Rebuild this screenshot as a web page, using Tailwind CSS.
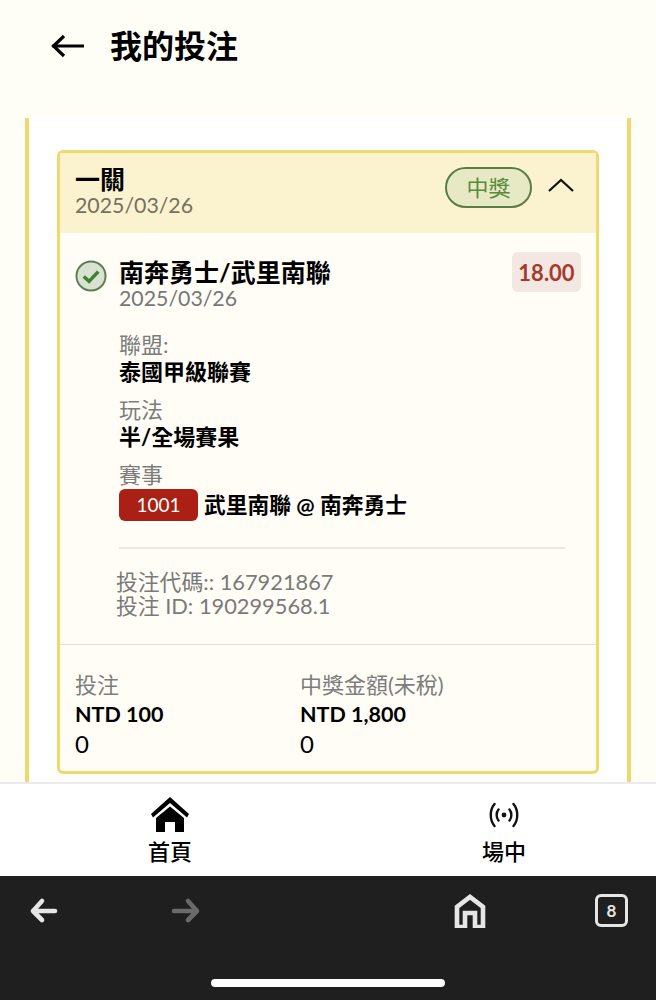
<!DOCTYPE html>
<html lang="zh-Hant">
<head>
  <meta charset="UTF-8">
  <meta name="viewport" content="width=device-width, initial-scale=1.0">
  <title>我的投注</title>
  <script src="https://cdn.jsdelivr.net/npm/@tailwindcss/browser@4"></script>
</head>
<body class="bg-[#fffef6] font-['Lato','Noto_Sans_CJK_TC',sans-serif] text-black">
  <div class="w-[656px] h-[1000px] flex flex-col overflow-hidden">

    <!-- Header -->
    <header class="h-[118px] shrink-0 flex items-start pl-[51px] pt-[27px] gap-[25px]">
      <svg class="w-[34px] h-[38px]" viewBox="0 0 34 38" fill="none" stroke="#000" stroke-width="3.2"><path d="M1 19H33M13 9L2.5 19L13 29"/></svg>
      <h1 class="text-[32px] leading-[38px] font-bold">我的投注</h1>
    </header>

    <!-- Content -->
    <main class="h-[664px] shrink-0 mx-[25px] bg-white border-x-4 border-[#f0d96c] pt-[32px] px-[28px]">
      <section class="h-[624px] border-[3px] border-[#f0d96c] rounded-[6px] bg-[#fffdf6] flex flex-col">
        <div class="h-[80px] shrink-0 bg-[#fbf3d0] flex justify-between pl-[15px] pr-[22px]">
          <div class="pt-[12px]">
            <div class="text-[25px] leading-[28px] font-bold">一關</div>
            <div class="text-[21.3px] leading-[24px] text-[#75705f]">2025/03/26</div>
          </div>
          <div class="flex items-start pt-[14px] gap-[16px]">
            <span class="w-[87px] h-[41px] rounded-full border-2 border-[#5a7d46] bg-[#e6e9c4] text-[#5a8a3c] text-[22px] flex items-center justify-center">中獎</span>
            <svg class="w-[26px] h-[16px] mt-[10px]" viewBox="0 0 26 16" fill="none" stroke="#111" stroke-width="2.3"><path d="M1 14L13 3L25 14"/></svg>
          </div>
        </div>

        <div class="flex-1 pl-[15px] pr-[15px] pt-[19px]">
          <div class="flex justify-between">
            <div class="flex gap-[12px]">
              <svg class="w-[32px] h-[32px] mt-[8px] shrink-0" viewBox="0 0 33 33" fill="none"><circle cx="16.5" cy="16.5" r="15" fill="#d9e2d1" stroke="#5a7d54" stroke-width="2"/><path d="M9 17L14.5 22L24 12" stroke="#3f7f35" stroke-width="3.6"/></svg>
              <div class="mt-[5px]">
                <div class="text-[25px] leading-[30px] font-bold">南奔勇士/武里南聯</div>
                <div class="text-[21.3px] leading-[22px] text-[#77777a]">2025/03/26</div>
              </div>
            </div>
            <span class="w-[69px] h-[40px] rounded-[6px] bg-[#f3e7e1] text-[#a53a30] text-[22px] font-bold flex items-center justify-center">18.00</span>
          </div>

          <div class="ml-[44px] mt-[22px]">
            <div class="text-[22px] leading-[27px] text-[#7d7d7d]">聯盟:</div>
            <div class="text-[22px] leading-[27px] font-bold">泰國甲級聯賽</div>
            <div class="text-[22px] leading-[27px] text-[#7d7d7d] mt-[11px]">玩法</div>
            <div class="text-[22px] leading-[27px] font-bold">半/全場賽果</div>
            <div class="text-[22px] leading-[27px] text-[#7d7d7d] mt-[11px]">賽事</div>
            <div class="flex items-center gap-[6px] mt-[1px]">
              <span class="w-[79px] h-[32px] rounded-[6px] bg-[#ab2014] text-white text-[19px] flex items-center justify-center">1001</span>
              <span class="text-[21.75px] leading-[32px] font-bold">武里南聯 @ 南奔勇士</span>
            </div>
          </div>

          <div class="ml-[44px] mr-[16px] mt-[26px] border-t-2 border-[#e8e8e4]"></div>

          <div class="ml-[41px] mt-[21px] text-[21.8px] leading-[23.5px] text-[#7a7a7a]">
            <div>投注代碼:: 167921867</div>
            <div>投注 ID: 190299568.1</div>
          </div>
        </div>

        <div class="h-[127px] shrink-0 border-t border-[#dfdfdc] pl-[15px] pt-[26px] flex">
          <div class="w-[225px]">
            <div class="text-[22px] leading-[28px] text-[#7d7d7d]">投注</div>
            <div class="text-[21.5px] leading-[31px] font-bold">NTD 100</div>
            <div class="text-[24px] leading-[28px]">0</div>
          </div>
          <div>
            <div class="text-[22px] leading-[28px] text-[#7d7d7d]">中獎金額(未稅)</div>
            <div class="text-[21.5px] leading-[31px] font-bold">NTD 1,800</div>
            <div class="text-[24px] leading-[28px]">0</div>
          </div>
        </div>
      </section>
    </main>

    <!-- Bottom nav -->
    <nav class="h-[94px] shrink-0 bg-white border-t-2 border-[#ecebec] relative flex">
      <div class="w-[340px] flex flex-col items-center pt-[13px]">
        <svg class="w-[40px] h-[36px]" viewBox="0 0 40 36" fill="#000"><path d="M20 0L39 17L37 20.5L20 6L3 20.5L1 17Z"/><path d="M6 21L20 9.5L34 21V35H25V25H15V35H6Z"/></svg>
        <span class="text-[22px] leading-[30px] mt-[4px] font-medium">首頁</span>
      </div>
      <div class="flex-1 flex flex-col items-center pt-[15px] pl-[12px]">
        <svg class="w-[32px] h-[32px]" viewBox="0 0 32 32" fill="none" stroke="#111" stroke-width="2.4" stroke-linecap="round"><circle cx="16" cy="16" r="2.4" fill="#111" stroke="none"/><path d="M10.5 10.5C8 13.5 8 18.5 10.5 21.5M21.5 10.5C24 13.5 24 18.5 21.5 21.5M6.5 5C1.5 11 1.5 21 6.5 27M25.5 5C30.5 11 30.5 21 25.5 27"/></svg>
        <span class="text-[22px] leading-[30px] mt-[6px] font-medium">場中</span>
      </div>
    </nav>

    <!-- Browser toolbar -->
    <div class="h-[124px] shrink-0 bg-[#1f1f1f] relative">
      <div class="flex items-start h-[80px] pt-[18px] pl-[29px]">
        <svg class="w-[30px] h-[30px] mt-[1px]" viewBox="0 0 30 30" fill="none" stroke="#e6e6e6" stroke-width="4.6" stroke-linecap="round" stroke-linejoin="round"><path d="M26 16H4M13 6L4 16L13 25"/></svg>
        <svg class="w-[30px] h-[30px] mt-[1px] ml-[112px]" viewBox="0 0 30 30" fill="none" stroke="#6a6a6c" stroke-width="4.6" stroke-linecap="round" stroke-linejoin="round"><path d="M3 16H26M17 6L26 16L17 25"/></svg>
        <svg class="w-[32px] h-[34px] ml-[253px]" viewBox="0 0 32 34" fill="none" stroke="#e6e6e6" stroke-width="4.6"><path d="M3 33V13L16 3L29 13V33H21V19H11V33Z"/></svg>
        <div class="w-[33px] h-[33px] ml-[109px] rounded-[6px] border-[3px] border-[#e6e6e6] text-[#e6e6e6] text-[17px] font-bold flex items-center justify-center">8</div>
      </div>
      <div class="absolute left-[211px] bottom-[13px] w-[234px] h-[8px] rounded-full bg-white"></div>
    </div>
  </div>
</body>
</html>
